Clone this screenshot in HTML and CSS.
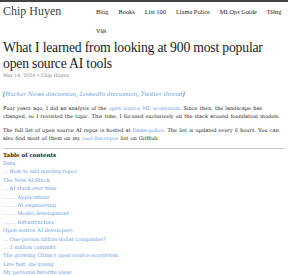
FILE: index.html
```html
<!DOCTYPE html>
<html lang="en">
<head>
    <meta charset="UTF-8">
    <meta name="viewport" content="width=device-width, initial-scale=1.0">
    <title>What I learned from looking at 900 most popular open source AI tools</title>
    <link rel="stylesheet" href="styles.css">
</head>
<body>
    <header class="site-header">
        <a class="site-title" href="#">Chip Huyen</a>
        <nav class="site-nav">
            <a class="page-link" href="#">Blog</a>
            <a class="page-link" href="#">Books</a>
            <a class="page-link" href="#">List 100</a>
            <a class="page-link" href="#">Llama Police</a>
            <a class="page-link" href="#">MLOps Guide</a>
            <a class="page-link" href="#">Tiếng Việt</a>
        </nav>
    </header>

    <main class="post">
        <h1 class="post-title">What I learned from looking at 900 most popular open source AI tools</h1>
        <p class="post-meta">Mar 14, 2024 • Chip Huyen</p>

        <p class="discussion">[<a href="#">Hacker News discussion</a>, <a href="#">LinkedIn discussion</a>, <a href="#">Twitter thread</a>]</p>

        <p>Four years ago, I did an analysis of the <a href="#">open source ML ecosystem</a>. Since then, the landscape has<br>changed, so I revisited the topic. This time, I focused exclusively on the stack around foundation models.</p>

        <p>The full list of open source AI repos is hosted at <a href="#">llama-police</a>. The list is updated every 6 hours. You can<br>also find most of them on my <a href="#">cool-llm-repos</a> list on GitHub.</p>

        <hr>

        <div class="toc">
            <p class="toc-title">Table of contents</p>
            <a class="toc-item" href="#">Data</a>
            <a class="toc-item" href="#">... How to add missing repos</a>
            <a class="toc-item" href="#">The New AI Stack</a>
            <a class="toc-item" href="#">... AI stack over time</a>
            <a class="toc-item" href="#">........ Applications</a>
            <a class="toc-item" href="#">........ AI engineering</a>
            <a class="toc-item" href="#">........ Model development</a>
            <a class="toc-item" href="#">........ Infrastructure</a>
            <a class="toc-item" href="#">Open source AI developers</a>
            <a class="toc-item" href="#">... One-person billion-dollar companies?</a>
            <a class="toc-item" href="#">... 1 million commits</a>
            <a class="toc-item" href="#">The growing China's open source ecosystem</a>
            <a class="toc-item" href="#">Live fast, die young</a>
            <a class="toc-item" href="#">My personal favorite ideas</a>
        </div>
    </main>
</body>
</html>
```

FILE: styles.css
```css
body {
    margin: 0;
    padding: 0 3px;
    border-top: 2px solid #424242;
    font-family: "Liberation Serif", serif;
    color: #222;
    background: #fff;
}
a {
    color: #6b9be0;
    text-decoration: none;
}
.site-header {
    display: flex;
    align-items: flex-start;
    height: 38px;
}
.site-title {
    font-size: 12px;
    line-height: 14px;
    margin-top: 2px;
    color: #424242;
    width: 93px;
    flex-shrink: 0;
}
.site-nav {
    font-size: 6.4px;
    line-height: 19px;
}
.page-link {
    color: #222;
    margin-right: 8.4px;
}
.post-title {
    font-size: 13.7px;
    line-height: 16px;
    font-weight: normal;
    color: #222;
    margin: 0;
    letter-spacing: -0.2px;
}
p {
    font-family: "DejaVu Serif", serif;
    font-size: 5.05px;
    line-height: 8px;
    word-spacing: 0.5px;
    margin: 0 0 6px;
}
.post-meta {
    font-size: 4.7px;
    color: #828282;
    word-spacing: 0;
    margin: 0 0 10px;
}
.discussion {
    font-style: italic;
    font-size: 5.7px;
    word-spacing: 0;
}
hr {
    border: none;
    border-top: 1px solid #ccc;
    margin: 0 0 2px;
}
.toc-title {
    font-weight: bold;
    font-size: 5.5px;
    word-spacing: 0;
    margin: 0;
}
.toc-item {
    display: block;
    font-family: "DejaVu Serif", serif;
    font-size: 5.1px;
    line-height: 8.4px;
}
```
